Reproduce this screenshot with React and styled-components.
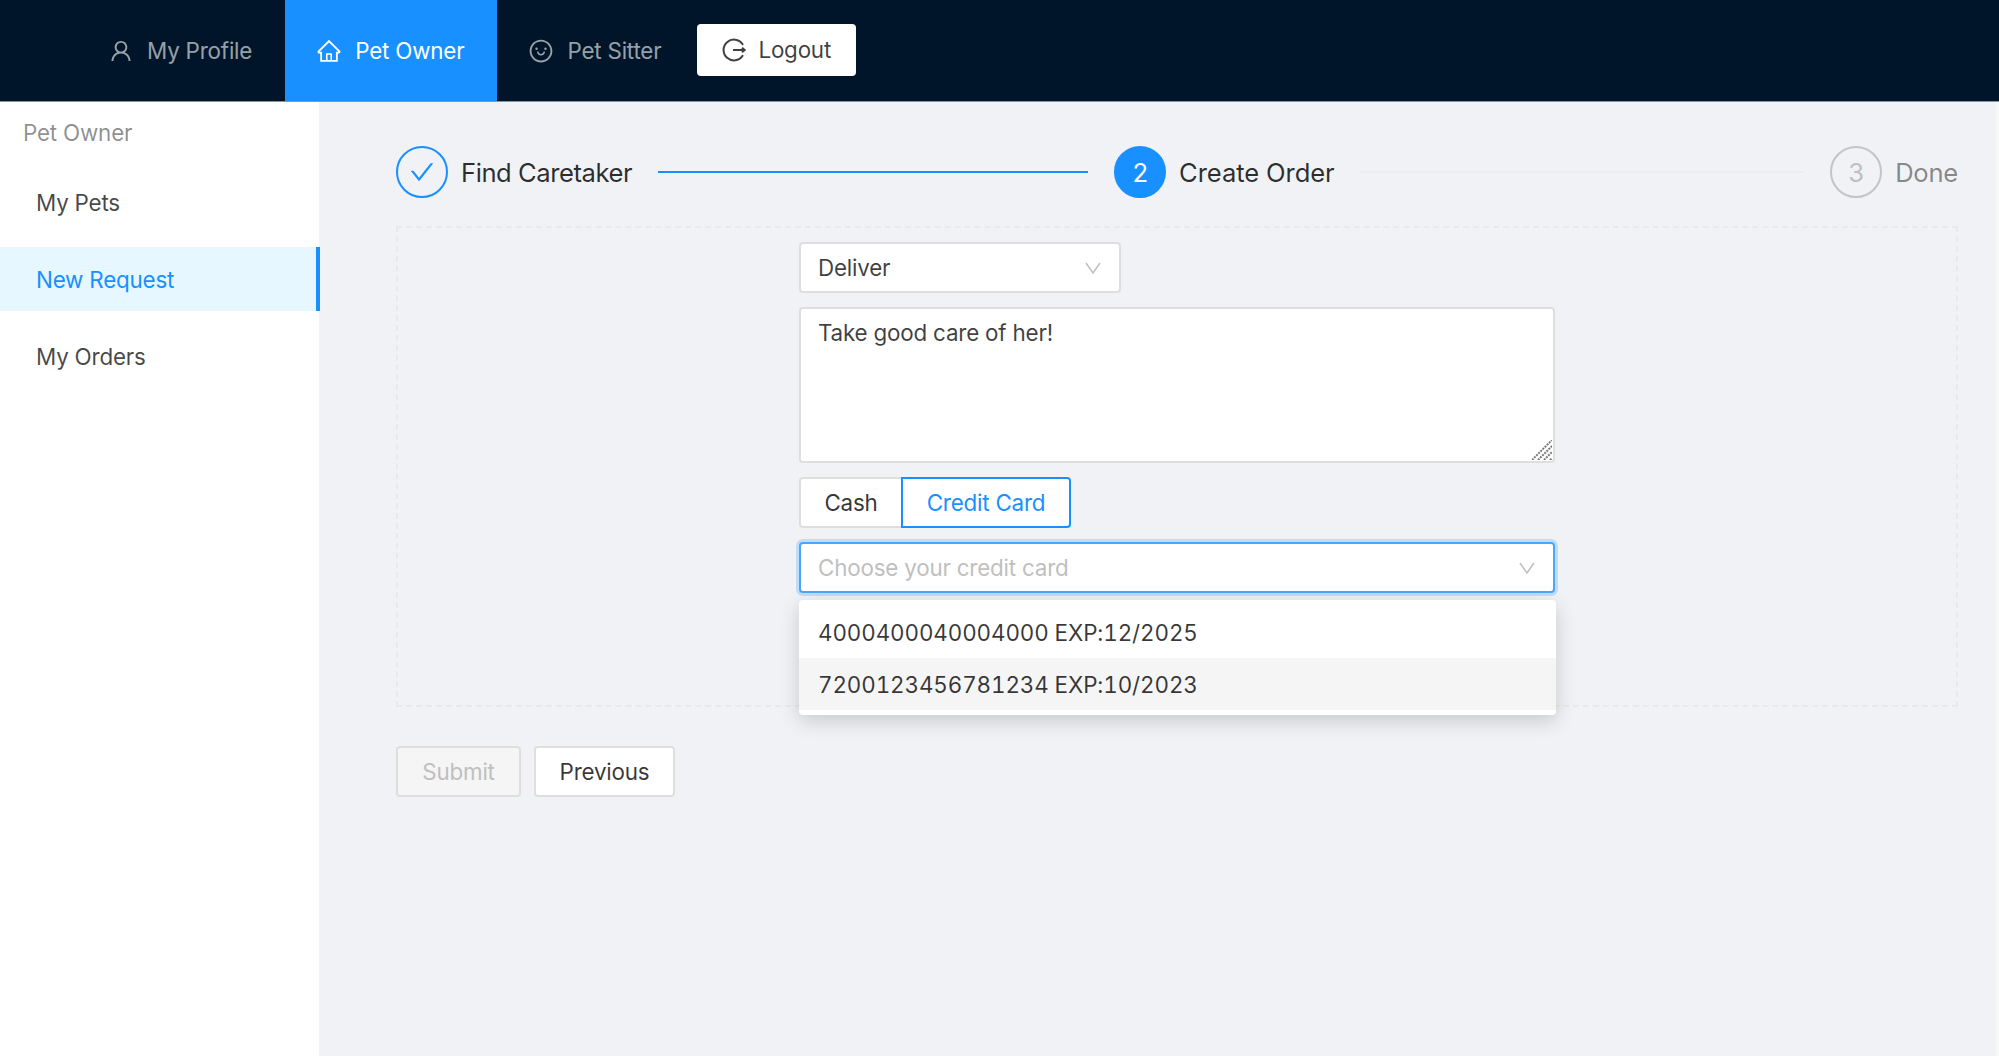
import React from 'react';
import styled, { createGlobalStyle } from 'styled-components';
import {
    AiOutlineCheck,
    AiOutlineHome,
    AiOutlineSmile,
    AiOutlineUser,
} from 'react-icons/ai';

const GlobalStyle = createGlobalStyle`
    html, body {
        margin: 0;
        height: 100%;
        overflow: hidden;
    }

    body {
        background: #f0f2f5;
        color: rgba(0, 0, 0, .8);
        font-family: Inter, "Noto Sans", "Liberation Sans", sans-serif;
        font-size: 22.4px;
        letter-spacing: -.2px;
    }

    * {
        box-sizing: border-box;
    }
`;

const Page = styled.div`
    display: flex;
    flex-direction: column;
    height: 1056px;
`;

const Header = styled.header`
    background: #001529;
    border-bottom: 1px solid #8794a1;
    display: flex;
    flex: none;
    height: 102px;
    padding-left: 77px;
`;

const NavItem = styled.a`
    align-items: center;
    background: ${({ $active }) => ($active ? '#1890ff' : 'transparent')};
    color: ${({ $active }) => ($active ? '#fff' : 'rgba(255, 255, 255, .6)')};
    display: flex;
    gap: 13px;
    padding: 0 33px 0 31px;

    svg {
        height: 26px;
        width: 26px;
    }
`;

const LogoutButton = styled.button`
    align-items: center;
    align-self: center;
    background: #fff;
    border: 0;
    border-radius: 4px;
    color: rgba(0, 0, 0, .75);
    display: flex;
    font: inherit;
    gap: 12px;
    height: 52px;
    letter-spacing: inherit;
    margin: 0 0 2px 3px;
    padding: 0 25px;
    width: 159px;
`;

const Body = styled.div`
    display: flex;
    flex: 1;
`;

const Sidebar = styled.aside`
    background: #fff;
    flex: none;
    padding-top: 13px;
    width: 319px;
`;

const SideTitle = styled.div`
    color: rgba(0, 0, 0, .45);
    line-height: 36px;
    margin-bottom: 19px;
    padding-left: 23px;
`;

const SideItem = styled.div`
    align-items: center;
    background: ${({ $active }) => ($active ? '#e6f7ff' : 'transparent')};
    border-right: 4px solid ${({ $active }) => ($active ? '#1890ff' : 'transparent')};
    color: ${({ $active }) => ($active ? '#1890ff' : 'rgba(0, 0, 0, .72)')};
    display: flex;
    height: 64px;
    margin: 0 -1px 13px 0;
    padding-left: 36px;
`;

const Main = styled.main`
    border-right: 3px solid #f8f8f9;
    flex: 1;
    padding: 44px 38px 0 77px;
`;

const Steps = styled.div`
    align-items: center;
    display: flex;
    height: 52px;
`;

const Step = styled.div`
    align-items: center;
    display: flex;
    flex: none;
    gap: 13px;
`;

const StepCircle = styled.div`
    align-items: center;
    background: ${({ $state }) => ($state === 'current' ? '#1890ff' : 'transparent')};
    border: 2px solid ${({ $state }) => ($state === 'waiting' ? '#c4c4c4' : '#1890ff')};
    border-radius: 50%;
    color: ${({ $state }) => {
        if ($state === 'current') return '#fff';
        if ($state === 'done') return '#1890ff';
        return '#bfbfbf';
    }};
    display: flex;
    font-size: 25.6px;
    height: 52px;
    justify-content: center;
    width: 52px;

    svg {
        height: 28px;
        width: 28px;
    }
`;

const StepTitle = styled.span`
    color: ${({ $waiting }) => ($waiting ? 'rgba(0, 0, 0, .45)' : 'rgba(0, 0, 0, .82)')};
    font-size: 25.6px;
    letter-spacing: ${({ $spacing }) => $spacing || '-.25px'};
`;

const StepLine = styled.div`
    background: ${({ $done }) => ($done ? '#1890ff' : '#ebedef')};
    flex: ${({ $done }) => ($done ? 'none' : 1)};
    height: 2px;
    margin: 0 26px;
    width: ${({ $done }) => ($done ? '430px' : 'auto')};
`;

const ContentBox = styled.section`
    border: 2px dashed #e9e9e9;
    display: flex;
    height: 481px;
    justify-content: center;
    margin-top: 28px;
    padding-top: 14px;
`;

const Form = styled.div`
    display: flex;
    flex-direction: column;
    gap: 14px;
    position: relative;
    width: 756px;
`;

const SelectBox = styled.div`
    align-items: center;
    background: #fff;
    border: 2px solid ${({ $focused }) => ($focused ? '#4ba6fb' : '#dedede')};
    border-radius: 4px;
    box-shadow: ${({ $focused }) => ($focused ? '0 0 0 3px rgba(24, 144, 255, .22)' : 'none')};
    color: ${({ $placeholder }) => ($placeholder ? '#bfbfbf' : 'rgba(0, 0, 0, .75)')};
    display: flex;
    flex: none;
    height: 51px;
    justify-content: space-between;
    padding: 0 18px 0 17px;
    width: ${({ $width }) => $width || '100%'};
`;

const Chevron = styled.svg`
    color: #bfbfbf;
    flex: none;
    height: 12px;
    width: 16px;
`;

const TextAreaWrap = styled.div`
    flex: none;
    height: 156px;
    position: relative;
`;

const TextArea = styled.textarea`
    background: #fff;
    border: 2px solid #dedede;
    border-radius: 4px;
    color: rgba(0, 0, 0, .75);
    display: block;
    font: inherit;
    height: 100%;
    letter-spacing: inherit;
    line-height: 34px;
    outline: 0;
    padding: 7px 17px;
    resize: none;
    width: 100%;
`;

const Grip = styled.svg`
    bottom: 3px;
    height: 20px;
    position: absolute;
    right: 3px;
    width: 20px;
`;

const RadioGroup = styled.div`
    display: flex;
    flex: none;
    height: 51px;
`;

const RadioButton = styled.div`
    align-items: center;
    background: #fff;
    border: 2px solid ${({ $checked }) => ($checked ? '#1890ff' : '#dedede')};
    border-radius: ${({ $checked }) => ($checked ? '0 4px 4px 0' : '4px 0 0 4px')};
    border-right-width: ${({ $checked }) => ($checked ? '2px' : '0')};
    color: ${({ $checked }) => ($checked ? '#1890ff' : 'rgba(0, 0, 0, .8)')};
    display: flex;
    justify-content: center;
    width: ${({ $width }) => $width}px;
`;

const Dropdown = styled.div`
    background: #fff;
    border-radius: 4px;
    box-shadow: 0 6px 20px rgba(0, 0, 0, .17);
    left: 0;
    padding: 6px 0 5px;
    position: absolute;
    right: -1px;
    top: 358px;
`;

const Option = styled.div`
    align-items: center;
    background: ${({ $active }) => ($active ? '#f5f5f5' : 'transparent')};
    color: rgba(0, 0, 0, .78);
    display: flex;
    font-variant-numeric: tabular-nums;
    height: 52px;
    letter-spacing: -.1px;
    padding-left: 19px;
`;

const Actions = styled.div`
    display: flex;
    gap: 13px;
    margin-top: 39px;
`;

const ActionButton = styled.button`
    background: ${({ disabled }) => (disabled ? '#f5f5f5' : '#fff')};
    border: 2px solid #dedede;
    border-radius: 4px;
    color: ${({ disabled }) => (disabled ? '#bfbfbf' : 'rgba(0, 0, 0, .78)')};
    font: inherit;
    height: 51px;
    letter-spacing: inherit;
    padding: 0;
    width: ${({ $width }) => $width}px;
`;

function LogoutIcon() {
    return (
        <svg width="24" height="24" viewBox="0 0 24 24" fill="none" stroke="currentColor" strokeWidth="2">
            <path d="M20.6 6.2A10.4 10.4 0 1 0 20.6 17.8" strokeLinecap="round" />
            <path d="M11 12h11.4M20 9.8l2.6 2.2-2.6 2.2" />
        </svg>
    );
}

function SelectArrow() {
    return (
        <Chevron viewBox="0 0 16 12" fill="none" stroke="currentColor" strokeWidth="1.5">
            <path d="M1 1l7 10 7-10" />
        </Chevron>
    );
}

function App() {
    return (
        <Page>
            <GlobalStyle />
            <Header>
                <NavItem><AiOutlineUser />My Profile</NavItem>
                <NavItem $active><AiOutlineHome />Pet Owner</NavItem>
                <NavItem><AiOutlineSmile />Pet Sitter</NavItem>
                <LogoutButton><LogoutIcon />Logout</LogoutButton>
            </Header>
            <Body>
                <Sidebar>
                    <SideTitle>Pet Owner</SideTitle>
                    <SideItem>My Pets</SideItem>
                    <SideItem $active>New Request</SideItem>
                    <SideItem>My Orders</SideItem>
                </Sidebar>
                <Main>
                    <Steps>
                        <Step>
                            <StepCircle $state="done"><AiOutlineCheck /></StepCircle>
                            <StepTitle $spacing="-.45px">Find Caretaker</StepTitle>
                        </Step>
                        <StepLine $done />
                        <Step>
                            <StepCircle $state="current">2</StepCircle>
                            <StepTitle $spacing="-.1px">Create Order</StepTitle>
                        </Step>
                        <StepLine />
                        <Step>
                            <StepCircle $state="waiting">3</StepCircle>
                            <StepTitle $waiting>Done</StepTitle>
                        </Step>
                    </Steps>
                    <ContentBox>
                        <Form>
                            <SelectBox $width="322px">Deliver<SelectArrow /></SelectBox>
                            <TextAreaWrap>
                                <TextArea defaultValue="Take good care of her!" />
                                <Grip viewBox="0 0 20 20" stroke="#777" strokeWidth="2" strokeDasharray="2 1">
                                    <path d="M0 20 20 0M6 20 20 6M12 20l8-8M18 20l2-2" />
                                </Grip>
                            </TextAreaWrap>
                            <RadioGroup>
                                <RadioButton $width={102}>Cash</RadioButton>
                                <RadioButton $width={170} $checked>Credit Card</RadioButton>
                            </RadioGroup>
                            <SelectBox $focused $placeholder>
                                Choose your credit card
                                <SelectArrow />
                            </SelectBox>
                            <Dropdown>
                                <Option>4000400040004000 EXP:12/2025</Option>
                                <Option $active>7200123456781234 EXP:10/2023</Option>
                            </Dropdown>
                        </Form>
                    </ContentBox>
                    <Actions>
                        <ActionButton disabled $width={125}>Submit</ActionButton>
                        <ActionButton $width={141}>Previous</ActionButton>
                    </Actions>
                </Main>
            </Body>
        </Page>
    );
}

export default App;
